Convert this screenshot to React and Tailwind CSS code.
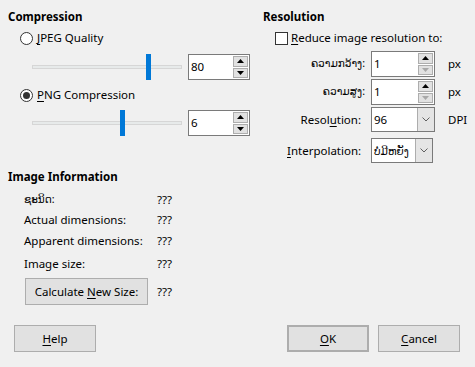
import React from "react";

const font = "font-['Noto_Sans','DejaVu_Sans',sans-serif]";

const U = ({ children }) => <span className="underline underline-offset-2">{children}</span>;

const Arrow = ({ up, disabled }) => (
  <svg width="7" height="4" viewBox="0 0 7 4">
    <polygon
      points={up ? "0,4 7,4 3.5,0" : "0,0 7,0 3.5,4"}
      fill={disabled ? "#a8a8a8" : "#000"}
    />
  </svg>
);

const SpinBox = ({ value, downDisabled, className }) => (
  <div className={`flex h-[26px] items-center border border-[#7a7a7a] bg-white ${className}`}>
    <span className="flex-1 pl-[2px]">{value}</span>
    <div className="flex h-full w-[16px] flex-col gap-[1px] py-[1px] pr-[1px]">
      <div className="flex flex-1 items-center justify-center border border-[#adadad] bg-[#e1e1e1]">
        <Arrow up />
      </div>
      <div className="flex flex-1 items-center justify-center border border-[#adadad] bg-[#e1e1e1]">
        <Arrow disabled={downDisabled} />
      </div>
    </div>
  </div>
);

const Combo = ({ children, className = "w-[64px]" }) => (
  <div className={`flex h-[25px] items-center border border-[#7a7a7a] bg-white ${className}`}>
    <span className="flex-1 overflow-hidden whitespace-nowrap pl-[2px]">{children}</span>
    <div className="flex h-full w-[17px] shrink-0 items-center justify-center border-l border-[#adadad] bg-[#e5e5e5]">
      <svg width="8" height="5" viewBox="0 0 8 5">
        <polyline points="0.5,0.5 4,4 7.5,0.5" fill="none" stroke="#606060" strokeWidth="1" />
      </svg>
    </div>
  </div>
);

const Slider = ({ pos }) => (
  <div className="relative h-[26px] w-[150px]">
    <div className="absolute left-0 right-0 top-[11px] h-[4px] border border-[#d6d6d6] bg-[#e7eaea]" />
    <div className="absolute top-0 h-[26px] w-[5px] bg-[#0078d7]" style={{ left: pos }} />
  </div>
);

const Radio = ({ checked, children }) => (
  <div className="flex h-[18px] items-center gap-[4px]">
    <div className="flex h-[13px] w-[13px] items-center justify-center rounded-full border border-[#333] bg-white">
      {checked && <div className="h-[7px] w-[7px] rounded-full bg-[#333]" />}
    </div>
    <span>{children}</span>
  </div>
);

const Button = ({ children, className = "" }) => (
  <div
    className={`flex h-[27px] w-[82px] items-center justify-center border border-[#adadad] bg-[#e1e1e1] ${className}`}
  >
    <span>{children}</span>
  </div>
);

const infoRows = [
  ["ຊະນິດ:", "???", "h-[18px]"],
  ["Actual dimensions:", "???", "h-[21px]"],
  ["Apparent dimensions:", "???", "h-[22px]"],
  ["Image size:", "???", "h-[23px]"],
];

const App = () => {
  return (
    <div className={`relative h-[367px] w-[475px] overflow-hidden bg-[#f0f0f0] text-[11.5px] text-black ${font}`}>
      <div className="flex pl-[8px] pt-[9px]">
        {/* Compression */}
        <div className="w-[255px]">
          <div className="flex h-[16px] items-center font-bold">Compression</div>
          <div className="mt-[4px] pl-[12px]">
            <Radio>
              <U>J</U>PEG Quality
            </Radio>
          </div>
          <div className="mt-[7px] flex items-center gap-[6px] pl-[24px]">
            <Slider pos={114} />
            <SpinBox value="80" className="w-[62px]" />
          </div>
          <div className="mt-[6px] pl-[12px]">
            <Radio checked>
              <U>P</U>NG Compression
            </Radio>
          </div>
          <div className="mt-[6px] flex items-center gap-[6px] pl-[24px]">
            <Slider pos={88} />
            <SpinBox value="6" className="w-[62px]" />
          </div>
        </div>

        {/* Resolution */}
        <div className="w-[205px]">
          <div className="flex h-[16px] items-center font-bold">Resolution</div>
          <div className="mt-[4px] flex h-[18px] items-center gap-[3px] pl-[12px]">
            <div className="h-[13px] w-[13px] border border-[#333] bg-white" />
            <span>
              <U>R</U>educe image resolution to:
            </span>
          </div>
          <div className="mt-[4px] flex flex-col gap-[2px]">
            {[
              ["ຄວາມກວ້າງ:", "1", "px"],
              ["ຄວາມສູງ:", "1", "px"],
            ].map(([label, val, unit]) => (
              <div key={label} className="flex items-center">
                <span className="w-[108px] pr-[6px] text-right text-[10.5px]">{label}</span>
                <SpinBox value={val} downDisabled className="w-[64px]" />
                <span className="pl-[13px]">{unit}</span>
              </div>
            ))}
            <div className="flex items-center">
              <span className="w-[108px] pr-[10px] text-right">
                Resol<U>u</U>tion:
              </span>
              <Combo>96</Combo>
              <span className="pl-[13px]">DPI</span>
            </div>
            <div className="mt-[4px] flex items-center">
              <span className="w-[108px] pl-[24px]">
                <U>I</U>nterpolation:
              </span>
              <Combo className="w-[62px]">
                <span className="text-[10.5px]">ບໍ່ມີຫຍັງ</span>
              </Combo>
            </div>
          </div>
        </div>
      </div>

      {/* Image Information */}
      <div className="mt-[5px] pl-[8px]">
        <div className="flex h-[18px] items-center font-bold">Image Information</div>
        <div className="mt-[5px] pl-[16px]">
          {infoRows.map(([label, val, h]) => (
            <div key={label} className={`flex items-center ${h}`}>
              <span className={`w-[133px] ${label.startsWith("ຊ") ? "text-[10.5px]" : ""}`}>{label}</span>
              <span>{val}</span>
            </div>
          ))}
          <div className="mt-[3px] flex items-center">
            <Button className="ml-[1px] w-[123px]">
              Calculate <U>N</U>ew Size:
            </Button>
            <span className="pl-[9px]">???</span>
          </div>
        </div>
      </div>

      {/* Buttons */}
      <div className="mt-[20px] flex items-center px-[14px]">
        <Button>
          <U>H</U>elp
        </Button>
        <div className="flex-1" />
        <Button className="border-2 border-[#0078d7]">
          <U>O</U>K
        </Button>
        <Button className="ml-[9px] mr-[1px]">
          <U>C</U>ancel
        </Button>
      </div>
    </div>
  );
};

export default App;
